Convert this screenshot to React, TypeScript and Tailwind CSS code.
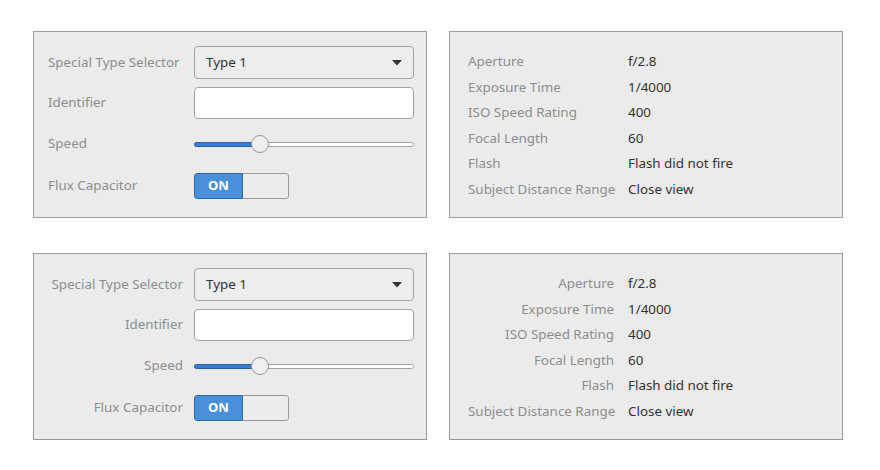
import React from "react";

const exif = [
  ["Aperture", "f/2.8"],
  ["Exposure Time", "1/4000"],
  ["ISO Speed Rating", "400"],
  ["Focal Length", "60"],
  ["Flash", "Flash did not fire"],
  ["Subject Distance Range", "Close view"],
];

function FormPanel({ right }: { right?: boolean }) {
  const label = right ? "text-right" : "text-left";
  return (
    <div className="w-[394px] h-[187px] border border-[#9a9a9a] bg-[#ebebeb] pl-[14px] pr-[12px] pt-[14px]">
      <div className="grid grid-cols-[135px_1fr] gap-x-[11px] gap-y-[8px] items-center">
        <div className={`${label} text-[#8b8e8f] whitespace-nowrap`}>Special Type Selector</div>
        <div className="h-[33px] rounded-[4px] border border-[#a3a3a3] bg-[#ededed] flex items-center justify-between pl-[11px] pr-[11px] text-[#2e3436]">
          <span>Type 1</span>
          <svg width="10" height="6" viewBox="0 0 10 6">
            <path d="M0 0 L10 0 L5 5.5 Z" fill="#2e3436" />
          </svg>
        </div>

        <div className={`${label} text-[#8b8e8f] -mt-[1px]`}>Identifier</div>
        <div className="h-[32px] rounded-[4px] border border-[#a3a3a3] bg-white" />

        <div className={`${label} text-[#8b8e8f] -mt-[2px]`}>Speed</div>
        <div className="h-[34px] relative flex items-center">
          <div className="w-full h-[5px] rounded-full border border-[#a3a3a3] bg-white" />
          <div className="absolute left-0 top-[15px] w-[62px] h-[5px] rounded-l-full bg-[#3b7bd0] border border-[#2a62ad]" />
          <div className="absolute left-[57px] top-[8px] w-[18px] h-[18px] rounded-full border border-[#9a9a9a] bg-[#efefef]" />
        </div>

        <div className={`${label} text-[#8b8e8f] -mt-[2px]`}>Flux Capacitor</div>
        <div className="h-[34px] flex items-center">
          <div className="flex w-[95px] h-[26px] rounded-[3px] overflow-hidden">
            <div className="w-[49px] h-full bg-[#4a90d9] border border-[#2c68ad] rounded-l-[3px] flex items-center justify-center text-white font-bold text-[13px]">
              ON
            </div>
            <div className="flex-1 h-full bg-[#ececec] border border-l-0 border-[#9a9a9a] rounded-r-[3px]" />
          </div>
        </div>
      </div>
    </div>
  );
}

function ExifPanel({ right }: { right?: boolean }) {
  return (
    <div className="w-[394px] h-[187px] border border-[#9a9a9a] bg-[#ebebeb] pl-[18px] pt-[17px]">
      <div className="grid grid-cols-[146px_1fr] gap-x-[14px]">
        {exif.map(([k, v]) => (
          <React.Fragment key={k}>
            <div className={`${right ? "text-right" : "text-left"} text-[#8b8e8f] leading-[25.6px] whitespace-nowrap`}>{k}</div>
            <div className="text-[#2e3436] leading-[25.6px] whitespace-nowrap">{v}</div>
          </React.Fragment>
        ))}
      </div>
    </div>
  );
}

export default function App() {
  return (
    <div
      className="w-[880px] h-[470px] bg-white pt-[31px] pl-[33px] text-[13.4px]"
      style={{ fontFamily: '"Noto Sans", "Open Sans", sans-serif' }}
    >
      <div className="flex flex-col gap-[35px]">
        <div className="flex gap-[22px]">
          <FormPanel />
          <ExifPanel />
        </div>
        <div className="flex gap-[22px]">
          <FormPanel right />
          <ExifPanel right />
        </div>
      </div>
    </div>
  );
}
